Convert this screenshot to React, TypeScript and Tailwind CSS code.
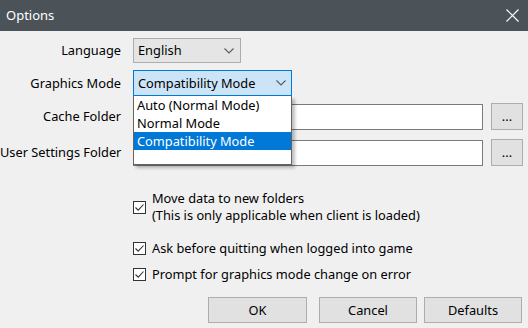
import React from "react";

const Chevron = () => (
  <svg width="10" height="6" viewBox="0 0 10 6" className="shrink-0">
    <path d="M0.5 0.5 L5 5 L9.5 0.5" fill="none" stroke="#5a5a5a" strokeWidth="1.1" />
  </svg>
);

const Check = () => (
  <div className="w-[13px] h-[13px] border border-[#333333] bg-white flex items-center justify-center shrink-0">
    <svg width="11" height="11" viewBox="0 0 11 11">
      <path d="M1.5 5.5 L4.2 8.2 L9.5 2.5" fill="none" stroke="#333333" strokeWidth="1.1" />
    </svg>
  </div>
);

const Label = ({ children }: { children: React.ReactNode }) => (
  <div className="w-[121px] text-right whitespace-nowrap">{children}</div>
);

export default function App() {
  return (
    <div
      className="w-[528px] h-[328px] bg-[#f0f0f0] flex flex-col overflow-hidden text-[12.8px] text-black leading-none"
      style={{ fontFamily: '"Noto Sans", "Open Sans", sans-serif' }}
    >
      <div className="h-[31px] bg-[#4b5359] flex items-center justify-between pl-[6px] pr-[9px] text-white shrink-0">
        <span className="text-[13px]">Options</span>
        <svg width="13" height="13" viewBox="0 0 13 13">
          <path d="M0.5 0.5 L12.5 12.5 M12.5 0.5 L0.5 12.5" stroke="#ffffff" strokeWidth="1.2" />
        </svg>
      </div>

      <div className="flex flex-col pt-[7px]">
        {/* Language */}
        <div className="flex items-center h-[25px]">
          <Label>Language</Label>
          <div className="ml-[12px] w-[108px] h-[25px] bg-[#e5e5e5] border border-[#adadad] flex items-center justify-between pl-[4px] pr-[6px]">
            <span>English</span>
            <Chevron />
          </div>
        </div>

        {/* Graphics Mode */}
        <div className="flex items-center h-[26px] mt-[7px] relative z-10">
          <Label>Graphics Mode</Label>
          <div className="ml-[12px] w-[159px] h-[26px] relative">
            <div className="w-full h-full bg-[#cce4f7] border border-[#0078d7] flex items-center justify-between pl-[4px] pr-[5px]">
              <span>Compatibility Mode</span>
              <Chevron />
            </div>
            <div className="absolute left-0 top-[26px] w-[159px] h-[69px] bg-white border-x border-b border-[#646464] shadow-[3px_3px_3px_rgba(0,0,0,0.25)] flex flex-col">
              <div className="h-[18px] flex items-center pl-[3px]">Auto (Normal Mode)</div>
              <div className="h-[18px] flex items-center pl-[3px]">Normal Mode</div>
              <div className="h-[18px] flex items-center pl-[3px] bg-[#0078d7] text-white">Compatibility Mode</div>
            </div>
          </div>
        </div>

        {/* Cache Folder */}
        <div className="flex items-center h-[27px] mt-[7px]">
          <Label>Cache Folder</Label>
          <div className="ml-[12px] w-[350px] h-[26px] bg-white border border-[#7a7a7a]" />
          <div className="ml-[8px] w-[32px] h-[27px] bg-[#e1e1e1] border border-[#adadad] flex items-center justify-center">...</div>
        </div>

        {/* User Settings Folder */}
        <div className="flex items-center h-[27px] mt-[9px]">
          <Label>User Settings Folder</Label>
          <div className="ml-[12px] w-[350px] h-[26px] bg-white border border-[#7a7a7a]" />
          <div className="ml-[8px] w-[32px] h-[27px] bg-[#e1e1e1] border border-[#adadad] flex items-center justify-center">...</div>
        </div>

        {/* Checkboxes */}
        <div className="flex flex-col pl-[133px] mt-[24px]">
          <div className="flex items-center gap-[6px]">
            <Check />
            <div className="leading-[17px]">
              <div>Move data to new folders</div>
              <div>(This is only applicable when client is loaded)</div>
            </div>
          </div>
          <div className="flex items-center gap-[6px] h-[20px] mt-[14px]">
            <Check />
            <span>Ask before quitting when logged into game</span>
          </div>
          <div className="flex items-center gap-[6px] h-[20px] mt-[6px]">
            <Check />
            <span>Prompt for graphics mode change on error</span>
          </div>
        </div>

        {/* Buttons */}
        <div className="flex mt-[13px] pl-[208px]">
          <div className="w-[99px] h-[26px] bg-[#e1e1e1] border border-[#adadad] flex items-center justify-center">OK</div>
          <div className="ml-[12px] w-[98px] h-[26px] bg-[#e1e1e1] border border-[#adadad] flex items-center justify-center">Cancel</div>
          <div className="ml-[7px] w-[98px] h-[26px] bg-[#e1e1e1] border border-[#adadad] flex items-center justify-center">Defaults</div>
        </div>
      </div>
    </div>
  );
}
